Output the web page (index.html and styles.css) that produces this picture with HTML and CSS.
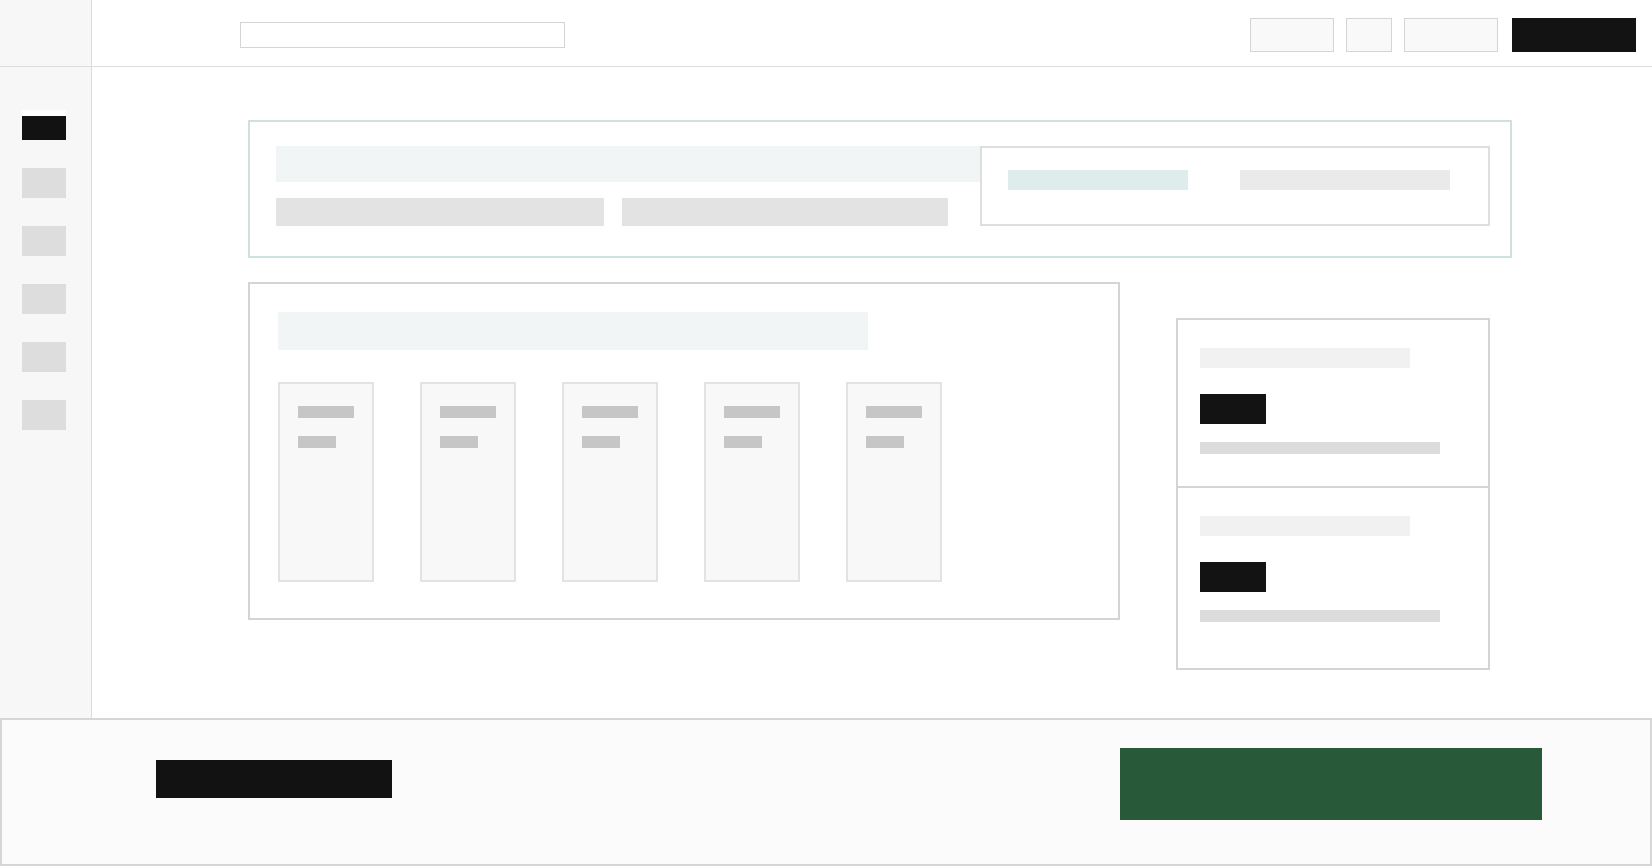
FILE: index.html
```html
<!DOCTYPE html>
<html lang="en">
<head>
    <meta charset="UTF-8">
    <meta name="viewport" content="width=device-width, initial-scale=1.0">
    <title>Workspace</title>
    <link rel="stylesheet" href="styles.css">
</head>
<body>
    <div class="shell">
        <aside class="sidebar">
            <div class="brand"></div>
            <nav class="nav">
                <div class="nav-item active"></div>
                <div class="nav-item"></div>
                <div class="nav-item"></div>
                <div class="nav-item"></div>
                <div class="nav-item"></div>
                <div class="nav-item"></div>
            </nav>
        </aside>

        <div class="main">
            <header class="topbar">
                <div class="search"></div>
                <div class="actions">
                    <div class="btn btn-wide"></div>
                    <div class="btn btn-small"></div>
                    <div class="btn btn-mid"></div>
                    <div class="btn btn-primary"></div>
                </div>
            </header>

            <main class="content">
                <section class="hero">
                    <div class="hero-left">
                        <div class="hero-title"></div>
                        <div class="hero-meta">
                            <div class="meta-bar"></div>
                            <div class="meta-bar second"></div>
                        </div>
                    </div>
                    <div class="hero-stats">
                        <div class="stat-accent"></div>
                        <div class="stat-plain"></div>
                    </div>
                </section>

                <div class="row">
                    <section class="board">
                        <div class="board-title"></div>
                        <div class="columns">
                            <div class="column"><div class="line"></div><div class="line short"></div></div>
                            <div class="column"><div class="line"></div><div class="line short"></div></div>
                            <div class="column"><div class="line"></div><div class="line short"></div></div>
                            <div class="column"><div class="line"></div><div class="line short"></div></div>
                            <div class="column"><div class="line"></div><div class="line short"></div></div>
                        </div>
                    </section>

                    <aside class="summary">
                        <div class="summary-block">
                            <div class="summary-label"></div>
                            <div class="summary-value"></div>
                            <div class="summary-bar"></div>
                        </div>
                        <div class="summary-block">
                            <div class="summary-label"></div>
                            <div class="summary-value"></div>
                            <div class="summary-bar"></div>
                        </div>
                    </aside>
                </div>
            </main>
        </div>
    </div>

    <footer class="actionbar">
        <div class="footer-label"></div>
        <div class="footer-cta"></div>
    </footer>
</body>
</html>
```

FILE: styles.css
```css
/* General Styles */
* {
    box-sizing: border-box;
}
body {
    margin: 0;
    padding: 0;
    background: #ffffff;
    font-family: 'Liberation Sans', Arial, sans-serif;
    width: 1652px;
    height: 866px;
    overflow: hidden;
}
.shell {
    display: flex;
    height: 718px;
}

/* Sidebar */
.sidebar {
    width: 92px;
    flex-shrink: 0;
    background: #f7f7f7;
    border-right: 1px solid #dcdcdc;
}
.brand {
    height: 67px;
    border-bottom: 1px solid #dcdcdc;
}
.nav {
    display: flex;
    flex-direction: column;
    gap: 28px;
    padding: 43px 0 0 22px;
}
.nav-item {
    width: 44px;
    height: 30px;
    background: #dddddd;
}
.nav-item.active {
    background: #121212;
    border-top: 6px solid #ffffff;
}

/* Top bar */
.main {
    flex: 1;
    display: flex;
    flex-direction: column;
}
.topbar {
    height: 67px;
    border-bottom: 1px solid #dcdcdc;
    display: flex;
    align-items: center;
    justify-content: space-between;
    padding: 4px 16px 0 148px;
}
.search {
    width: 325px;
    height: 26px;
    border: 1px solid #d4d4d4;
    background: #ffffff;
}
.actions {
    display: flex;
    gap: 12px;
}
.btn {
    height: 34px;
    background: #f9f9f9;
    border: 1px solid #d4d4d4;
}
.btn-wide {
    width: 84px;
}
.btn-small {
    width: 46px;
}
.btn-mid {
    width: 94px;
}
.btn-primary {
    width: 124px;
    margin-left: 2px;
    background: #131313;
    border-color: #131313;
}

/* Content */
.content {
    padding: 53px 0 0 156px;
}
.hero {
    width: 1264px;
    border: 2px solid #cfe0e0;
    display: flex;
    align-items: flex-start;
    justify-content: space-between;
    padding: 24px 20px 30px 26px;
}
.hero-left {
    width: 704px;
}
.hero-title {
    height: 36px;
    background: #f1f5f5;
}
.hero-meta {
    display: flex;
    gap: 18px;
    margin-top: 16px;
}
.meta-bar {
    width: 328px;
    height: 28px;
    background: #e3e3e3;
}
.meta-bar.second {
    width: 326px;
}
.hero-stats {
    width: 510px;
    height: 80px;
    border: 2px solid #dedede;
    display: flex;
    align-items: flex-start;
    gap: 52px;
    padding: 22px 0 0 26px;
}
.stat-accent {
    width: 180px;
    height: 20px;
    background: #deecec;
}
.stat-plain {
    width: 210px;
    height: 20px;
    background: #eaeaea;
}

.row {
    display: flex;
    align-items: flex-start;
    gap: 56px;
    margin-top: 24px;
}

/* Board */
.board {
    width: 872px;
    height: 338px;
    border: 2px solid #d4d4d4;
    padding: 28px 0 0 28px;
}
.board-title {
    width: 590px;
    height: 38px;
    background: #f1f5f5;
}
.columns {
    display: flex;
    gap: 46px;
    margin-top: 32px;
}
.column {
    width: 96px;
    height: 200px;
    background: #f8f8f8;
    border: 2px solid #e3e3e3;
    padding: 22px 0 0 18px;
}
.line {
    width: 56px;
    height: 12px;
    background: #c6c6c6;
}
.line.short {
    width: 38px;
    margin-top: 18px;
}

/* Summary */
.summary {
    width: 314px;
    height: 352px;
    margin-top: 36px;
    border: 2px solid #d4d4d4;
    display: flex;
    flex-direction: column;
}
.summary-block {
    padding: 28px 22px 32px;
}
.summary-block:first-child {
    border-bottom: 2px solid #d4d4d4;
}
.summary-block:last-child {
    flex: 1;
}
.summary-label {
    width: 210px;
    height: 20px;
    background: #f1f1f1;
}
.summary-value {
    width: 66px;
    height: 30px;
    margin-top: 26px;
    background: #131313;
}
.summary-bar {
    width: 240px;
    height: 12px;
    margin-top: 18px;
    background: #dcdcdc;
}

/* Footer */
.actionbar {
    height: 148px;
    background: #fbfbfb;
    border: 2px solid #d6d6d6;
    display: flex;
    align-items: flex-start;
    justify-content: space-between;
    padding: 0 108px 0 154px;
}
.footer-label {
    width: 236px;
    height: 38px;
    margin-top: 40px;
    background: #121212;
}
.footer-cta {
    width: 422px;
    height: 72px;
    margin-top: 28px;
    background: #285a3a;
}
```
